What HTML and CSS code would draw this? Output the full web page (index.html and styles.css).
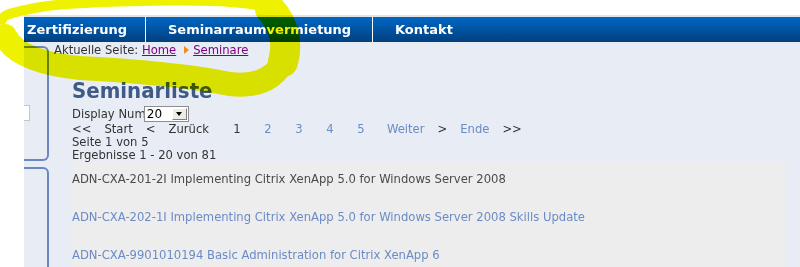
FILE: index.html
```html
<!DOCTYPE html>
<html>
<head>
    <title>Seminarliste</title>
    <link rel="stylesheet" href="styles.css">
</head>
<body>
    <div class="page">
        <div class="topline"></div>
        <ul class="nav">
            <li class="first">Zertifizierung</li>
            <li class="second">Seminarraumvermietung</li>
            <li>Kontakt</li>
        </ul>

        <div class="main">
            <div class="side">
                <div class="box box1"><div class="field"></div></div>
                <div class="box box2"></div>
            </div>

            <div class="content">
                <div class="crumb">
                    Aktuelle Seite: <a href="#">Home</a><span class="arrow"></span><a href="#">Seminare</a>
                </div>

                <div class="inner">
                    <h1>Seminarliste</h1>
                    <div class="display">
                        Display Num
                        <span class="select"><span class="val">20</span><span class="btn"><i></i></span></span>
                    </div>
                    <div class="pager">
                        <span>&lt;&lt;</span>
                        <span>Start</span>
                        <span>&lt;</span>
                        <span class="back">Zurück</span>
                        <span class="num">1</span>
                        <a class="num" href="#">2</a>
                        <a class="num" href="#">3</a>
                        <a class="num" href="#">4</a>
                        <a class="num" href="#">5</a>
                        <a class="next" href="#">Weiter</a>
                        <span>&gt;</span>
                        <a href="#">Ende</a>
                        <span>&gt;&gt;</span>
                    </div>
                    <div class="line">Seite 1 von 5</div>
                    <div class="line">Ergebnisse 1 - 20 von 81</div>

                    <div class="list">
                        <div class="item">ADN-CXA-201-2I Implementing Citrix XenApp 5.0 for Windows Server 2008</div>
                        <div class="item"><a href="#">ADN-CXA-202-1I Implementing Citrix XenApp 5.0 for Windows Server 2008 Skills Update</a></div>
                        <div class="item"><a href="#">ADN-CXA-9901010194 Basic Administration for Citrix XenApp 6</a></div>
                    </div>
                </div>
            </div>
        </div>
    </div>

    <!-- Markierung -->
    <svg class="marker" width="310" height="110" viewBox="0 0 310 110">
        <path d="M 272 8 C 240 0, 190 0, 140 1 C 90 2, 50 4, 30 9 C 15 12, 3 14, 2 20" fill="none" stroke="#eef200" stroke-width="10" stroke-linecap="round"/>
        <path d="M 5 36 C 14 54, 40 64, 80 68 C 140 71, 190 76, 230 84 C 265 88, 283 72, 285 50" fill="none" stroke="#eef200" stroke-width="24" stroke-linecap="round"/>
        <path d="M 283 62 C 288 45, 285 25, 270 9" fill="none" stroke="#eef200" stroke-width="30" stroke-linecap="round"/>
    </svg>
</body>
</html>
```

FILE: styles.css
```css
body { margin: 0; font-family: "DejaVu Sans", Verdana, sans-serif; font-size: 11.6px; color: #333; background: #fff; }
a { color: #6b8bc6; text-decoration: none; }

.page { margin-left: 24px; padding-top: 15px; }
.topline { height: 2px; background: #e4e4e4; }

.nav { display: flex; height: 25px; margin: 0; padding: 0; list-style: none; background: linear-gradient(#0067c6, #00407e); }
.nav li { box-sizing: border-box; padding-left: 22px; color: #fff; font-weight: bold; font-size: 13px; line-height: 25px; }
.nav .first { width: 122px; padding-left: 3px; border-right: 1px solid #fff; }
.nav .second { width: 227px; border-right: 1px solid #fff; }

.main { display: flex; height: 225px; background: #e8ecf4; overflow: hidden; }

.side { width: 25px; flex-shrink: 0; padding-top: 4px; }
.box { border: 2px solid #6b87bf; border-left: none; border-radius: 0 6px 6px 0; }
.box1 { height: 111px; }
.box2 { height: 200px; margin-top: 6px; }
.field { width: 5px; height: 14px; margin-top: 57px; background: #fff; border: 1px solid #c6c6c6; border-left: none; }

.content { flex: 1; padding-left: 5px; }
.crumb { line-height: 16px; }
.crumb a { color: #800080; text-decoration: underline; }
.arrow { display: inline-block; margin: 0 4px 0 8px; border-left: 5px solid #f28c1e; border-top: 4px solid transparent; border-bottom: 4px solid transparent; }

.inner { margin: 0 15px 0 17px; }
h1 { margin: 20px 0 0 1px; font-family: "DejaVu Sans Condensed", "DejaVu Sans", sans-serif; font-stretch: condensed; font-size: 22px; line-height: 26px; color: #3f5a86; }

.display { display: flex; align-items: center; height: 19px; padding-left: 1px; }
.select { display: inline-flex; box-sizing: border-box; width: 45px; height: 16px; margin-left: -2px; background: #fff; border: 1px solid #8e8e8e; color: #000; font-size: 12px; }
.select .val { flex: 1; padding-left: 2px; line-height: 14px; }
.select .btn { display: flex; align-items: center; justify-content: center; width: 13px; margin: 1px; background: #ecebe6; border: 1px solid #fff; border-right-color: #808080; border-bottom-color: #808080; }
.select .btn i { border-top: 4px solid #000; border-left: 3px solid transparent; border-right: 3px solid transparent; }

.pager { display: flex; gap: 13px; padding-left: 1px; line-height: 13px; }
.pager .num { padding: 0 5.3px; }
.pager .back { margin-right: 6px; }
.pager .next { margin-left: 4px; }
.line { padding-left: 1px; line-height: 13px; }

.list { background: #ededed; }
.item { padding: 10px 0 14px 1px; line-height: 14px; color: #4a4a4a; }

.marker { position: absolute; left: 0; top: 0; pointer-events: none; mix-blend-mode: multiply; }
```
